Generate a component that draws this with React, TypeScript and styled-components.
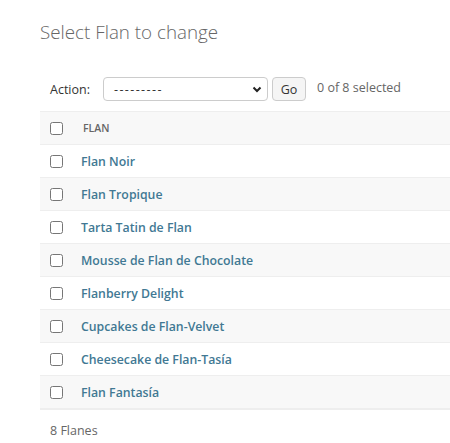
import React from "react";
import styled, { createGlobalStyle } from "styled-components";

const GlobalStyle = createGlobalStyle`
  body {
    margin: 0;
    background: #fff;
    font-family: "Open Sans", "Noto Sans", sans-serif;
    color: #333;
  }
`;

const Content = styled.div`
  padding: 20px 0 0 40px;
`;

const Title = styled.h1`
  margin: 0;
  font-size: 18.8px;
  line-height: 24px;
  font-weight: 300;
  color: #666;
`;

const Actions = styled.div`
  margin-top: 33px;
  height: 24px;
  padding-left: 10px;
  display: flex;
  align-items: center;
  font-size: 12.5px;
`;

const Label = styled.span`
  width: 53px;
  color: #333;
`;

const Select = styled.div`
  box-sizing: border-box;
  width: 165px;
  height: 24px;
  border: 1px solid #ccc;
  border-radius: 4px;
  display: flex;
  align-items: center;
  justify-content: space-between;
  padding: 0 5px 0 10px;
  color: #333;
`;

const Dashes = styled.span`
  letter-spacing: 1.4px;
`;

const GoButton = styled.button`
  box-sizing: border-box;
  margin-left: 4px;
  width: 34px;
  height: 24px;
  padding: 0;
  border: 1px solid #ccc;
  border-radius: 4px;
  background: #f5f5f5;
  font-family: inherit;
  font-size: 12.5px;
  color: #333;
`;

const Counter = styled.span`
  margin-left: 11px;
  color: #666;
  position: relative;
  top: -2px;
`;

const Table = styled.div`
  margin-top: 10px;
  border-top: 1px solid #eee;
`;

const Row = styled.div<{ $shaded?: boolean }>`
  height: 32px;
  display: flex;
  align-items: center;
  border-bottom: 1px solid #eee;
  background: ${(p) => (p.$shaded ? "#f8f8f8" : "#fff")};
`;

const CheckCell = styled.div`
  box-sizing: border-box;
  width: 41px;
  padding-left: 10px;
  display: flex;
  align-items: center;
`;

const Checkbox = styled.input`
  margin: 0;
  width: 13px;
  height: 13px;
`;

const HeadText = styled.span`
  margin-left: 2px;
  font-size: 10.5px;
  font-weight: 600;
  text-transform: uppercase;
  color: #666;
`;

const Link = styled.a`
  font-size: 12.3px;
  font-weight: 600;
  color: #417893;
  text-decoration: none;
`;

const Paginator = styled.div`
  border-top: 1px solid #eee;
  padding: 10px 0 10px 10px;
  line-height: 22px;
  font-size: 12.5px;
  color: #666;
`;

const flanes = [
  "Flan Noir",
  "Flan Tropique",
  "Tarta Tatin de Flan",
  "Mousse de Flan de Chocolate",
  "Flanberry Delight",
  "Cupcakes de Flan-Velvet",
  "Cheesecake de Flan-Tasía",
  "Flan Fantasía",
];

const Chevron = () => (
  <svg width="10" height="7" viewBox="0 0 10 7">
    <path d="M1.5 1.5 L5 5 L8.5 1.5" fill="none" stroke="#222" strokeWidth="2" />
  </svg>
);

const App = () => (
  <>
    <GlobalStyle />
    <Content>
      <Title>Select Flan to change</Title>
      <Actions>
        <Label>Action:</Label>
        <Select>
          <Dashes>---------</Dashes>
          <Chevron />
        </Select>
        <GoButton>Go</GoButton>
        <Counter>0 of 8 selected</Counter>
      </Actions>
      <Table>
        <Row $shaded>
          <CheckCell>
            <Checkbox type="checkbox" />
          </CheckCell>
          <HeadText>Flan</HeadText>
        </Row>
        {flanes.map((name, i) => (
          <Row key={name} $shaded={i % 2 === 1}>
            <CheckCell>
              <Checkbox type="checkbox" />
            </CheckCell>
            <Link href="#">{name}</Link>
          </Row>
        ))}
      </Table>
      <Paginator>8 Flanes</Paginator>
    </Content>
  </>
);

export default App;
